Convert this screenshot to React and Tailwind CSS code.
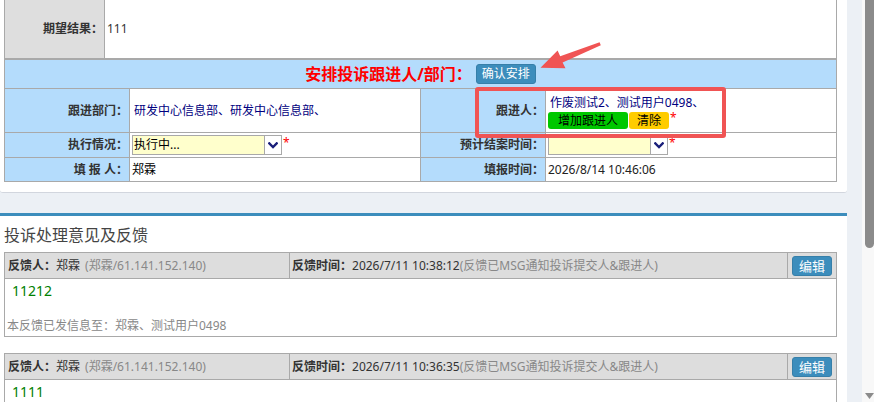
import React from "react";

// Yellow dropdown with a white chevron box on the right
function SelectBox({ widthClass, text }) {
  return (
    <div className={`flex h-[20px] ${widthClass} border border-[#a9a9a9] bg-[#ffffcc]`}>
      <span className="flex-1 overflow-hidden whitespace-nowrap pl-px text-[12px] leading-[18px] text-black">{text}</span>
      <span className="flex w-[17px] items-center justify-center border-l border-[#a9a9a9] bg-white">
        <svg width="10" height="7" viewBox="0 0 10 7">
          <polyline points="1.3,1.3 5,5 8.7,1.3" fill="none" stroke="#1a1f7a" strokeWidth="2.3" strokeLinecap="square" />
        </svg>
      </span>
    </div>
  );
}

function Star() {
  return <span className="ml-[1px] -mt-[4px] text-[12px] leading-none text-[#ff0000]">*</span>;
}

function Feedback({ time, body, sent, className }) {
  return (
    <div className={`w-[833px] border border-[#a9a9a9] ${className}`}>
      <div className="grid h-[26px] grid-cols-[284px_497px_48px] gap-x-px border-b border-[#a9a9a9] bg-[#a9a9a9] text-[12px]">
        <div className="flex items-center whitespace-nowrap bg-[#dddddd] pl-[3px]">
          <span className="font-bold text-[#333]">反馈人：</span>
          <span className="text-[#333]">郑霖</span>
          <span className="ml-[5px] text-[#888]">(郑霖/61.141.152.140)</span>
        </div>
        <div className="flex items-center whitespace-nowrap bg-[#dddddd] pl-[2px]">
          <span className="font-bold text-[#333]">反馈时间：</span>
          <span className="text-[#333]">{time}</span>
          <span className="text-[#888]">(反馈已MSG通知投诉提交人&amp;跟进人)</span>
        </div>
        <div className="flex items-center justify-center bg-[#dddddd]">
          <button className="h-[20px] w-[40px] rounded-[3px] border border-[#367fa9] bg-[#3c8dbc] text-[13px] leading-[18px] text-white">
            编辑
          </button>
        </div>
      </div>
      <div className="pb-px">
        <div className="pl-[7px] pt-[2px] text-[14px] leading-[20px] text-[#008000]">{body}</div>
        {sent && <div className="mt-[16px] pl-[2px] text-[12px] leading-[18px] text-[#888]">{sent}</div>}
      </div>
    </div>
  );
}

export default function App() {
  return (
    <div className="relative flex h-[402px] w-[874px] overflow-hidden bg-[#ecf0f5] font-['Noto_Sans','Noto_Sans_CJK_SC',sans-serif] text-[12px] text-[#333]">
      <div className="flex w-[862px] flex-col">
        {/* complaint detail panel */}
        <section className="w-[847px] rounded-b-[3px] border-b border-[#d2d6de] bg-white pb-[10px] pl-[4px]">
          <div className="grid h-[59px] w-[833px] grid-cols-[99px_731px] gap-x-px border-x border-b border-[#a9a9a9] bg-[#a9a9a9]">
            <div className="flex items-center justify-end bg-[#dedede] pr-[1px] font-bold text-[#333]">期望结果：</div>
            <div className="flex items-center bg-white pl-[2px] text-[#333]">111</div>
          </div>

          <div className="grid w-[833px] grid-cols-[124px_290px_124px_290px] grid-rows-[28px_43px_24px_23px] gap-px border border-[#a9a9a9] bg-[#a9a9a9]">
            <div className="col-span-4 flex items-center justify-center bg-[#b4dcfc]">
              <span className="text-[16px] font-bold leading-[20px] text-[#ff0000]">安排投诉跟进人/部门：</span>
              <button className="ml-[4px] h-[20px] rounded-[3px] border border-[#367fa9] bg-[#3c8dbc] px-[5px] text-[12px] leading-[18px] text-white">
                确认安排
              </button>
            </div>

            <div className="flex items-center justify-end bg-[#b4dcfc] pr-[1px] font-bold">跟进部门：</div>
            <div className="flex items-center bg-white pl-[4px] text-[#000080]">研发中心信息部、研发中心信息部、</div>
            <div className="flex items-center justify-end bg-[#b4dcfc] pr-[1px] font-bold">跟进人：</div>
            <div className="flex flex-col justify-center bg-white pl-[2px]">
              <div className="pl-[2px] leading-[19px] text-[#000080]">作废测试2、测试用户0498、</div>
              <div className="flex items-center">
                <span className="h-[17px] rounded-[3px] bg-[#00c800] px-[10px] text-[12px] leading-[17px] text-black">增加跟进人</span>
                <span className="ml-px h-[17px] rounded-[3px] bg-[#ffcc00] px-[8px] text-[12px] leading-[17px] text-black">清除</span>
                <Star />
              </div>
            </div>

            <div className="flex items-center justify-end bg-[#b4dcfc] pr-[1px] font-bold">执行情况：</div>
            <div className="flex items-center bg-white pl-[2px]">
              <SelectBox widthClass="w-[150px]" text="执行中..." />
              <Star />
            </div>
            <div className="flex items-center justify-end bg-[#b4dcfc] pr-[1px] font-bold">预计结案时间：</div>
            <div className="flex items-center bg-white pl-[2px]">
              <SelectBox widthClass="w-[120px]" text="" />
              <Star />
            </div>

            <div className="flex items-center justify-end bg-[#b4dcfc] pr-[1px] font-bold whitespace-pre">填 报 人：</div>
            <div className="flex items-center bg-white pl-[2px] text-black">郑霖</div>
            <div className="flex items-center justify-end bg-[#b4dcfc] pr-[1px] font-bold">填报时间：</div>
            <div className="flex items-center bg-white pl-[2px] text-[#222]">2026/8/14 10:46:06</div>
          </div>
        </section>

        {/* feedback list */}
        <section className="mt-[20px] w-[847px] flex-1 border-t-[3px] border-[#3c8dbc] bg-white pl-[4px]">
          <h3 className="pt-[9px] text-[16px] leading-[20px] font-normal text-[#444]">投诉处理意见及反馈</h3>
          <Feedback className="mt-[7px]" time="2026/7/11 10:38:12" body="11212" sent="本反馈已发信息至：郑霖、测试用户0498" />
          <Feedback className="mt-[16px]" time="2026/7/11 10:36:35" body="1111" />
        </section>
      </div>

      {/* window scrollbar */}
      <div className="flex w-[12px] flex-col bg-[#f8f8f8] pl-[3px]">
        <div className="-mt-[5px] h-[253px] w-[9px] rounded-[5px] bg-[#8b8b8b]" />
        <div className="mt-auto mb-[3px] flex justify-center">
          <svg width="9" height="6" viewBox="0 0 9 6">
            <polygon points="0,0 9,0 4.5,6" fill="#8b8b8b" />
          </svg>
        </div>
      </div>

      {/* red callout drawn over the form */}
      <div className="pointer-events-none absolute left-[475px] top-[87px] h-[51px] w-[251px] rounded-[3px] border-[4px] border-[#f05454]" />
      <svg className="pointer-events-none absolute left-0 top-0" width="874" height="402" viewBox="0 0 874 402">
        <polygon
          points="540.5,67.8 565.5,68.2 562.6,62.4 600.8,45.2 599.6,42.2 560.2,56.2 557.6,50.6"
          fill="#f05454"
        />
      </svg>
    </div>
  );
}
